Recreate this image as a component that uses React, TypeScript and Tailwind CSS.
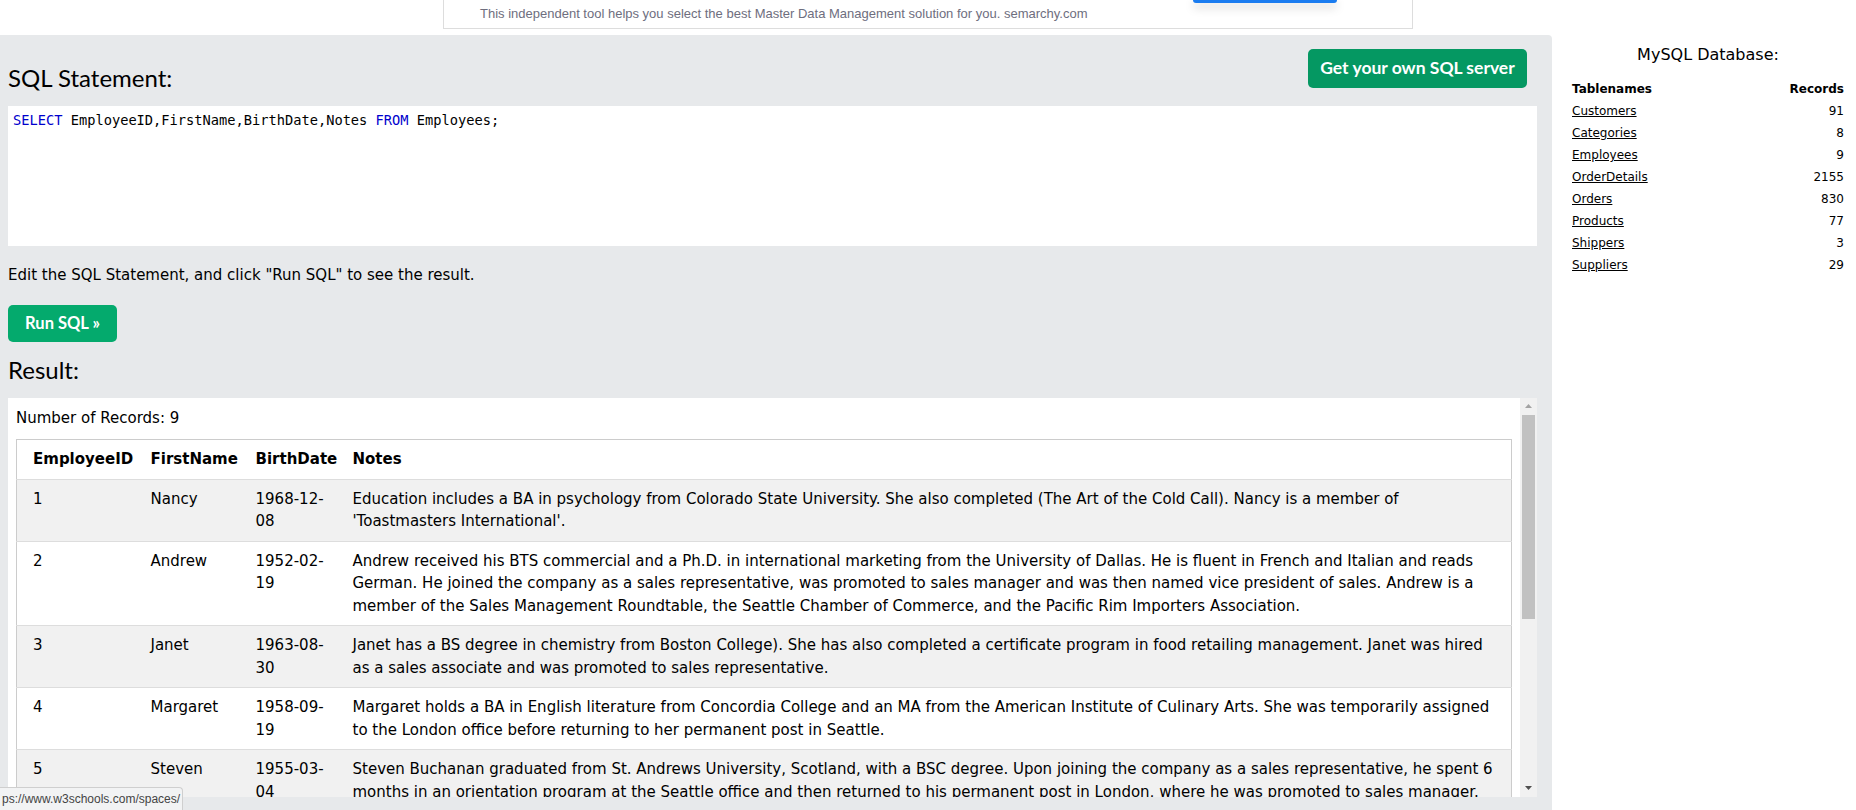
import React from "react";

const rows: [string, string, string, string][] = [
  ["1", "Nancy", "1968-12-08", "Education includes a BA in psychology from Colorado State University. She also completed (The Art of the Cold Call). Nancy is a member of 'Toastmasters International'."],
  ["2", "Andrew", "1952-02-19", "Andrew received his BTS commercial and a Ph.D. in international marketing from the University of Dallas. He is fluent in French and Italian and reads German. He joined the company as a sales representative, was promoted to sales manager and was then named vice president of sales. Andrew is a member of the Sales Management Roundtable, the Seattle Chamber of Commerce, and the Pacific Rim Importers Association."],
  ["3", "Janet", "1963-08-30", "Janet has a BS degree in chemistry from Boston College). She has also completed a certificate program in food retailing management. Janet was hired as a sales associate and was promoted to sales representative."],
  ["4", "Margaret", "1958-09-19", "Margaret holds a BA in English literature from Concordia College and an MA from the American Institute of Culinary Arts. She was temporarily assigned to the London office before returning to her permanent post in Seattle."],
  ["5", "Steven", "1955-03-04", "Steven Buchanan graduated from St. Andrews University, Scotland, with a BSC degree. Upon joining the company as a sales representative, he spent 6 months in an orientation program at the Seattle office and then returned to his permanent post in London, where he was promoted to sales manager. Mr. Buchanan has completed the courses 'Successful Telemarketing' and 'International Sales Management'. He is fluent in French."],
  ["6", "Michael", "1963-07-02", "Michael is a graduate of Sussex University (MA, economics, 1983) and the University of California at Los Angeles (MBA, marketing, 1986). He has also taken the courses 'Multi-Cultural Selling' and 'Time Management for the Sales Professional'. He is fluent in Japanese and can read and write French, Portuguese, and Spanish."],
  ["7", "Robert", "1960-05-29", "Robert King served in the Peace Corps and traveled extensively before completing his degree in English at the University of Michigan and then joining the company. After completing a course entitled 'Selling in Europe', he was transferred to the London office."],
  ["8", "Laura", "1958-01-09", "Laura received a BA in psychology from the University of Washington. She has also completed a course in business French. She reads and writes French."],
  ["9", "Anne", "1969-07-02", "Anne has a BA degree in English from St. Lawrence College. She is fluent in French and German."],
];

const dbTables: [string, string][] = [
  ["Customers", "91"],
  ["Categories", "8"],
  ["Employees", "9"],
  ["OrderDetails", "2155"],
  ["Orders", "830"],
  ["Products", "77"],
  ["Shippers", "3"],
  ["Suppliers", "29"],
];

export default function App() {
  return (
    <div className="relative w-[1856px] h-[810px] overflow-hidden bg-white font-['DejaVu_Sans',Verdana,sans-serif] text-black">
      {/* top banner */}
      <div className="h-[35px] flex justify-center">
        <div className="w-[970px] h-[29px] bg-white border border-t-0 border-[#dddddd] flex items-start">
          <span className="self-center pl-[36px] text-[13px] text-[#6e6e7e] font-['Liberation_Sans',Arial,sans-serif]">
            This independent tool helps you select the best Master Data Management solution for you. semarchy.com
          </span>
          <div className="ml-auto mr-[75px] w-[144px] h-[3px] bg-[#1a7cf0] rounded-b-[3px] shadow-[0_4px_10px_rgba(0,0,0,0.25)]" />
        </div>
      </div>

      <div className="flex h-[775px]">
        {/* main gray */}
        <main className="w-[1552px] shrink-0 bg-[#E7E9EB] rounded-tr-[4px] pl-[8px] pr-[15px] pt-[14px]">
          <div className="flex justify-between items-start">
            <h2 className="mt-[15px] text-[24px] leading-[28px] font-['Lato',sans-serif] font-normal text-black">SQL Statement:</h2>
            <button className="mr-[10px] w-[219px] h-[39px] rounded-[5px] bg-[#059862] text-white font-bold text-[17.5px] font-['Lato',sans-serif]">
              Get your own SQL server
            </button>
          </div>
          <div className="mt-[14px] h-[140px] bg-white pl-[5px] pt-[4px] font-['DejaVu_Sans_Mono',monospace] text-[13.7px] leading-[20px] whitespace-pre">
            <span className="text-[#0000cd]">SELECT</span>
            <span> EmployeeID,FirstName,BirthDate,Notes </span>
            <span className="text-[#0000cd]">FROM</span>
            <span> Employees;</span>
          </div>
          <p className="mt-[18px] text-[15px] leading-[22.5px]">Edit the SQL Statement, and click "Run SQL" to see the result.</p>
          <button className="mt-[18px] w-[109px] h-[37px] rounded-[5px] bg-[#04AA6D] text-white font-bold text-[16.5px] font-['Lato',sans-serif]">
            Run SQL »
          </button>
          <h2 className="mt-[14px] text-[24px] leading-[28px] font-['Lato',sans-serif] font-normal text-black">Result:</h2>

          <div className="mt-[14px] h-[399px] bg-white flex">
            <div className="flex-1 overflow-hidden pl-[8px] pt-[9px]">
              <div className="text-[15px] leading-[22.5px] mb-[10px]">Number of Records: 9</div>
              <table className="w-full table-fixed border-collapse border border-[#cccccc] text-[15px] leading-[22.5px]">
                <colgroup>
                  <col className="w-[126px]" />
                  <col className="w-[105px]" />
                  <col className="w-[97px]" />
                  <col />
                </colgroup>
                <thead>
                  <tr className="bg-white border-b border-[#dddddd]">
                    <th className="text-left font-bold py-[8px] pl-[16px] pr-[8px]">EmployeeID</th>
                    <th className="text-left font-bold p-[8px]">FirstName</th>
                    <th className="text-left font-bold p-[8px]">BirthDate</th>
                    <th className="text-left font-bold p-[8px]">Notes</th>
                  </tr>
                </thead>
                <tbody>
                  {rows.map((r, i) => (
                    <tr key={r[0]} className={`border-b border-[#dddddd] ${i % 2 === 0 ? "bg-[#f1f1f1]" : "bg-white"}`}>
                      <td className="align-top py-[8px] pl-[16px] pr-[8px]">{r[0]}</td>
                      <td className="align-top p-[8px]">{r[1]}</td>
                      <td className="align-top p-[8px] break-words">{r[2]}</td>
                      <td className="align-top p-[8px]">{r[3]}</td>
                    </tr>
                  ))}
                </tbody>
              </table>
            </div>
            {/* scrollbar */}
            <div className="w-[17px] ml-[8px] bg-[#f1f1f1] flex flex-col">
              <div className="h-[17px] flex items-center justify-center">
                <svg width="7" height="4" viewBox="0 0 7 4"><path d="M0 4 L3.5 0 L7 4 Z" fill="#a3a3a3" /></svg>
              </div>
              <div className="flex-1 px-[2px]">
                <div className="h-[204px] bg-[#c1c1c1]" />
              </div>
              <div className="h-[17px] flex items-center justify-center">
                <svg width="7" height="4" viewBox="0 0 7 4"><path d="M0 0 L3.5 4 L7 0 Z" fill="#505050" /></svg>
              </div>
            </div>
          </div>
        </main>

        {/* right panel */}
        <aside className="flex-1 pl-[20px] pr-[12px] pt-[8px]">
          <h3 className="text-center text-[16px] leading-[24px] font-normal text-black">MySQL Database:</h3>
          <table className="mt-[11px] w-full text-[12px] leading-[22px]">
            <thead>
              <tr>
                <th className="text-left font-bold">Tablenames</th>
                <th className="text-right font-bold">Records</th>
              </tr>
            </thead>
            <tbody>
              {dbTables.map(([n, c]) => (
                <tr key={n}>
                  <td className="text-left"><a className="underline text-black cursor-pointer">{n}</a></td>
                  <td className="text-right">{c}</td>
                </tr>
              ))}
            </tbody>
          </table>
        </aside>
      </div>

      {/* browser status bubble */}
      <div className="absolute left-0 bottom-0 w-[183px] h-[23px] bg-[#f2f3f4] border-t border-r border-[#cfcfcf] rounded-tr-[4px] flex items-center pl-[2px] text-[12px] text-[#444] font-['Liberation_Sans',Arial,sans-serif] whitespace-nowrap overflow-hidden">
        ps://www.w3schools.com/spaces/
      </div>
    </div>
  );
}
